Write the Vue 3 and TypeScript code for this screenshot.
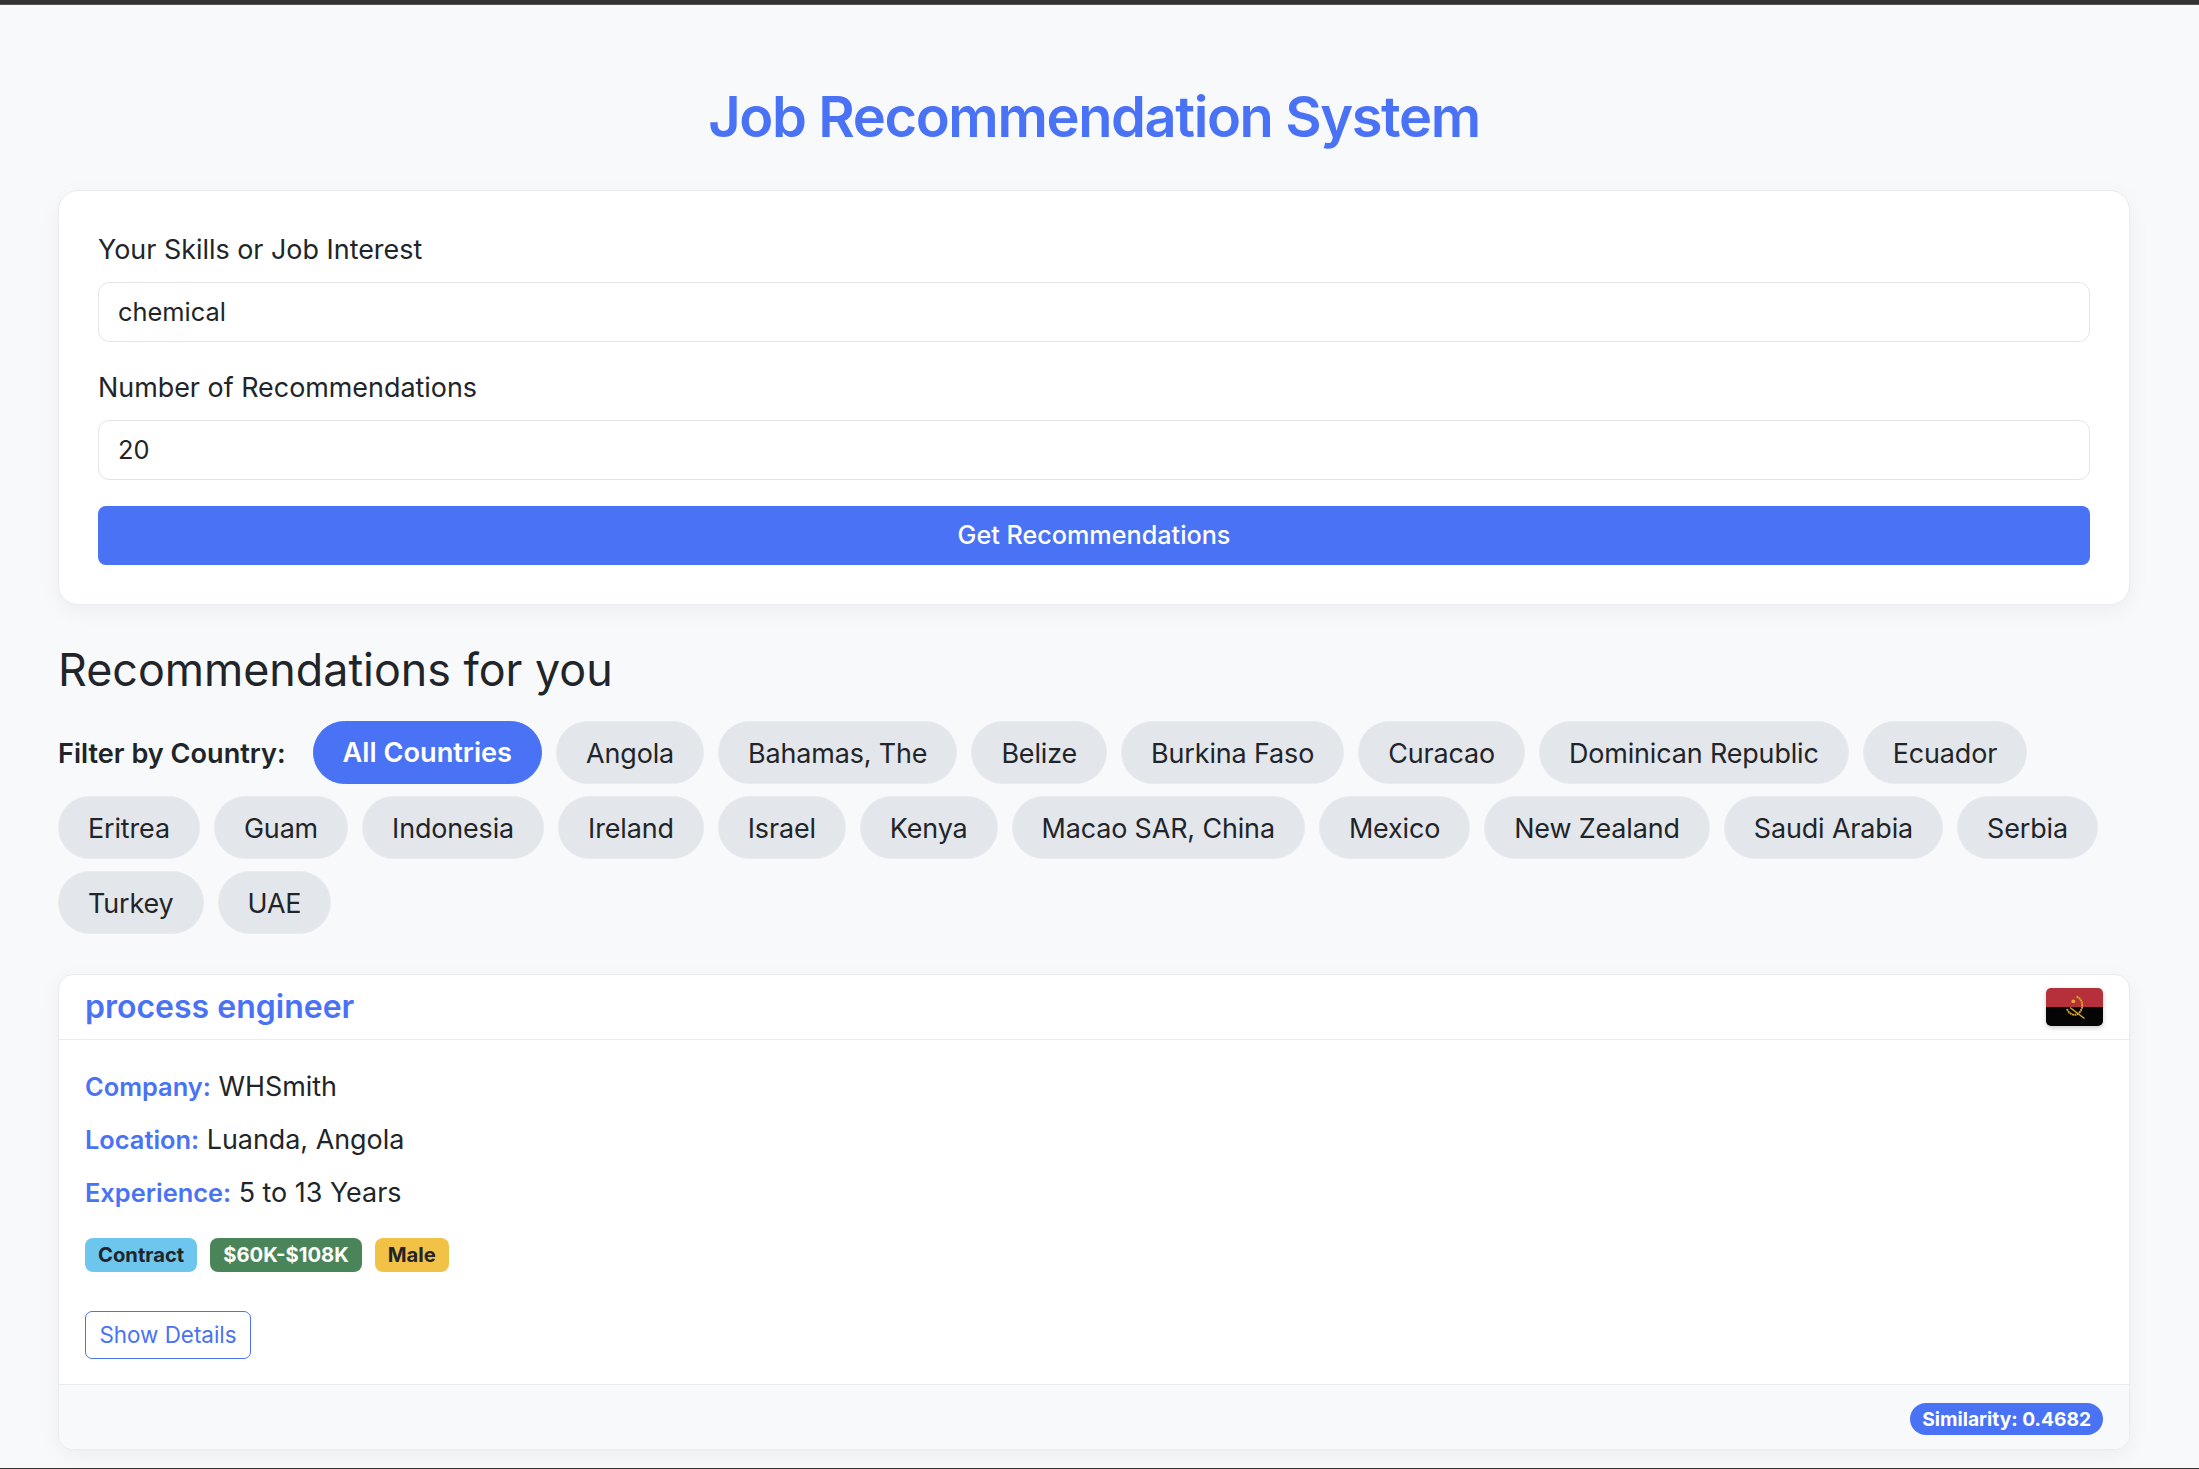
<template>
  <div class="frame">
    <div class="top-edge"></div>
    <main class="page">
      <h1 class="title">Job Recommendation System</h1>

      <form class="search-card" @submit.prevent>
        <label class="field-label" for="skills">Your Skills or Job Interest</label>
        <input id="skills" v-model="skills" class="field" type="text" />
        <label class="field-label second" for="count">Number of Recommendations</label>
        <input id="count" v-model="count" class="field" type="text" />
        <button class="submit" type="submit">Get Recommendations</button>
      </form>

      <h2 class="section-title">Recommendations for you</h2>

      <div class="filters">
        <span class="filter-label">Filter by Country:</span>
        <button
          v-for="c in countries"
          :key="c"
          class="chip"
          :class="{ active: c === selected }"
          @click="selected = c"
        >{{ c }}</button>
      </div>

      <article class="job-card">
        <header class="job-head">
          <h3 class="job-title">process engineer</h3>
          <svg class="flag" viewBox="0 0 57 38" aria-label="Angola flag">
            <rect width="57" height="19" fill="#b5303a" />
            <rect y="19" width="57" height="19" fill="#050505" />
            <path d="M30.5 8.5 C37 11 38.5 20 32.5 25.5" fill="none" stroke="#d9a32e" stroke-width="2" stroke-dasharray="2 .5" />
            <path d="M21 21 C23 26 28 28.5 32.5 25.5" fill="none" stroke="#d9a32e" stroke-width="2" stroke-dasharray="2 .5" />
            <path d="M24 19.5 L38.5 30.5" fill="none" stroke="#d9a32e" stroke-width="1.5" />
            <circle cx="27.3" cy="13.3" r="1.9" fill="#e2a838" />
          </svg>
        </header>

        <div class="job-body">
          <p v-for="row in details" :key="row.label" class="detail">
            <strong>{{ row.label }}:</strong> {{ row.value }}
          </p>
          <div class="badges">
            <span class="badge info">Contract</span>
            <span class="badge success">$60K-$108K</span>
            <span class="badge warning">Male</span>
          </div>
          <button class="details-btn">Show Details</button>
        </div>

        <footer class="job-foot">
          <span class="score">Similarity: 0.4682</span>
        </footer>
      </article>
    </main>
    <div class="bottom-edge"></div>
  </div>
</template>

<script setup lang="ts">
import { ref } from 'vue'

const skills = ref('chemical')
const count = ref('20')
const selected = ref('All Countries')

const countries = [
  'All Countries', 'Angola', 'Bahamas, The', 'Belize', 'Burkina Faso', 'Curacao',
  'Dominican Republic', 'Ecuador', 'Eritrea', 'Guam', 'Indonesia', 'Ireland', 'Israel',
  'Kenya', 'Macao SAR, China', 'Mexico', 'New Zealand', 'Saudi Arabia', 'Serbia',
  'Turkey', 'UAE',
]

const details = [
  { label: 'Company', value: 'WHSmith' },
  { label: 'Location', value: 'Luanda, Angola' },
  { label: 'Experience', value: '5 to 13 Years' },
]
</script>

<style>
body { background: #f8f9fa; }
</style>

<style scoped>
.frame {
  height: 1469px; display: flex; flex-direction: column; overflow: hidden;
  font-family: Inter, "Liberation Sans", sans-serif; color: #212529; background: #f8f9fa;
}
.top-edge { height: 5px; flex: none; background: linear-gradient(#333 70%, #666); }
.bottom-edge { height: 1px; flex: none; background: #333; }
.page { flex: 1; min-height: 0; padding: 0 69px 0 58px; }

.title {
  margin: 79px 0 0; height: 67px; line-height: 67px; text-align: center;
  font-size: 56px; font-weight: 600; color: #4a72f5; letter-spacing: -1.4px;
}

.search-card {
  margin-top: 39px; height: 415px; box-sizing: border-box; padding: 39px 39px 0;
  display: flex; flex-direction: column;
  background: #fff; border: 1px solid #e9ebee; border-radius: 20px;
  box-shadow: 0 6px 22px rgba(0, 0, 0, .05);
}
.field-label {
  font-size: 26.9px; line-height: 34px; height: 34px; margin-top: 2px; margin-bottom: 16px;
}
.field-label.second { margin-top: 28px; }
.field {
  height: 60px; box-sizing: border-box; padding: 0 19px 2px; flex: none;
  font: 25.4px Inter, sans-serif; color: #212529; background: #fff;
  border: 1.5px solid #e3e5e8; border-radius: 11px; outline: none;
}
.submit {
  margin-top: 26px; height: 59px; flex: none; border: 0; border-radius: 8px; padding: 0 0 2px;
  background: #4a72f5; color: #fff; font: 500 25.2px Inter, sans-serif;
}

.section-title { margin: 38px 0 0; font-size: 44.8px; line-height: 54px; font-weight: 400; }

.filters { margin-top: 24px; display: flex; flex-wrap: wrap; align-items: center; gap: 12px 14px; }
.filter-label { font-size: 27.1px; font-weight: 600; margin-right: 13px; padding-top: 2px; }
.chip {
  height: 63px; padding: 0 29px; box-sizing: border-box;
  font: 26.9px Inter, sans-serif; letter-spacing: -.12px; color: #212529;
  background: #e3e6ea; border: 1.5px solid #e9ebee; border-radius: 32px;
}
.chip.active {
  background: #4a72f5; border-color: #4a72f5; color: #fff;
  font-weight: 600; font-size: 27.2px; letter-spacing: 0;
}

.job-card {
  margin-top: 40px; height: 476px; box-sizing: border-box; overflow: hidden;
  display: flex; flex-direction: column;
  background: #fff; border: 1px solid #e9ebee; border-radius: 15px;
  box-shadow: 0 6px 22px rgba(0, 0, 0, .05);
}
.job-head {
  height: 65px; flex: none; box-sizing: border-box; padding: 0 26px;
  display: flex; justify-content: space-between; align-items: center;
  border-bottom: 1px solid #e9ebf0;
}
.job-title { margin: 0 0 2px; font-size: 32px; font-weight: 600; color: #4a72f5; }
.flag { width: 57px; height: 38px; border-radius: 5px; box-shadow: 0 2px 5px rgba(0, 0, 0, .2); }

.job-body { flex: 1; padding: 29px 26px 0; }
.detail { margin: 0 0 18px; font-size: 26.9px; line-height: 34px; }
.detail strong { color: #4a72f5; font-weight: 600; font-size: 25.4px; }
.badges { margin-top: 28px; display: flex; gap: 13px; }
.badge {
  height: 34px; line-height: 34px; padding: 0 13px; border-radius: 8px;
  font-size: 20.2px; font-weight: 700;
}
.badge.info { background: #6cc6ee; }
.badge.success { background: #4a855a; color: #fff; }
.badge.warning { background: #f2c246; }
.details-btn {
  display: block; margin-top: 39px; width: 166px; height: 48px; padding: 0 0 1px;
  font: 22.4px Inter, sans-serif; color: #4a72f5; background: #fff;
  border: 1.5px solid #4a72f5; border-radius: 7px;
}

.job-foot {
  height: 65px; flex: none; box-sizing: border-box; padding: 3px 26px 0;
  display: flex; justify-content: flex-end; align-items: center;
  background: #f8f9fb; border-top: 1px solid #e9ebf0;
}
.score {
  height: 32px; line-height: 32px; padding: 0 12px; border-radius: 16px;
  background: #4a72f5; color: #fff; font-size: 19.2px; font-weight: 700;
}
</style>
